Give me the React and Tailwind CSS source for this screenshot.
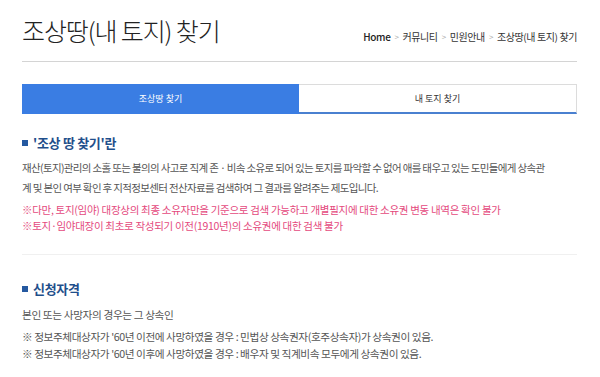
import React from 'react';

const font = { fontFamily: '"Noto Sans CJK KR", "Noto Sans", sans-serif' };

function Breadcrumb() {
  const items = ['커뮤니티', '민원안내', '조상땅(내 토지) 찾기'];
  return (
    <div className="flex items-center text-[10px] leading-[12px] text-[#333] tracking-[-0.4px]">
      <span className="font-medium text-[#222]">Home</span>
      {items.map((it) => (
        <React.Fragment key={it}>
          <span className="mx-[4px] text-[#aaa] text-[8px]">&gt;</span>
          <span>{it}</span>
        </React.Fragment>
      ))}
    </div>
  );
}

function SectionTitle({ children }) {
  return (
    <h3 className="flex items-center text-[13px] leading-[16px] font-bold text-[#1f4f8b] tracking-[-0.3px]">
      <span className="w-[6px] h-[6px] bg-[#2559a0] mr-[5px]" />
      {children}
    </h3>
  );
}

export default function App() {
  return (
    <div className="w-[600px] h-[377px] bg-white overflow-hidden" style={font}>
      <div className="ml-[22px] w-[555px]">
        {/* Header */}
        <div className="flex justify-between items-start h-[62px] border-b border-[#d4d4d4]">
          <h1 className="mt-[13px] text-[25px] leading-[34px] font-light text-[#222] tracking-[-1.1px]">
            조상땅(내 토지) 찾기
          </h1>
          <div className="mt-[31px]">
            <Breadcrumb />
          </div>
        </div>

        {/* Tabs */}
        <div className="flex mt-[22px] h-[30px] text-[9px]">
          <div className="w-[277px] flex items-center justify-center bg-[#3a7de3] text-white">
            조상땅 찾기
          </div>
          <div className="flex-1 flex items-center justify-center border-t border-r border-[#dcdcdc] border-b-2 border-b-[#4a80d0] text-[#333]">
            내 토지 찾기
          </div>
        </div>

        {/* Section 1 */}
        <div className="mt-[21px]">
          <SectionTitle>'조상 땅 찾기'란</SectionTitle>
          <p className="mt-[7px] text-[10.5px] leading-[20px] text-[#555] tracking-[-0.65px] whitespace-nowrap">
            재산(토지)관리의 소홀 또는 불의의 사고로 직계 존 · 비속 소유로 되어 있는 토지를 파악할 수 없어 애를 태우고 있는 도민들에게 상속관
            <br />
            계 및 본인 여부 확인 후 지적정보센터 전산자료를 검색하여 그 결과를 알려주는 제도입니다.
          </p>
          <div className="mt-[4px] text-[10.5px] leading-[16px] text-[#e4497d] tracking-[-0.3px] whitespace-nowrap">
            <p>※다만, 토지(임야) 대장상의 최종 소유자만을 기준으로 검색 가능하고 개별필지에 대한 소유권 변동 내역은 확인 불가</p>
            <p>※토지·임야대장이 최초로 작성되기 이전(1910년)의 소유권에 대한 검색 불가</p>
          </div>
        </div>

        <div className="mt-[20px] border-t border-[#f0f0f0]" />

        {/* Section 2 */}
        <div className="mt-[26px]">
          <SectionTitle>신청자격</SectionTitle>
          <p className="mt-[9px] text-[10.7px] leading-[18px] text-[#555] tracking-[-0.4px]">
            본인 또는 사망자의 경우는 그 상속인
          </p>
          <div className="mt-[4px] text-[10.7px] leading-[17px] text-[#555] tracking-[-0.45px] whitespace-nowrap">
            <p>※ 정보주체대상자가 '60년 이전에 사망하였을 경우 : 민법상 상속권자(호주상속자)가 상속권이 있음.</p>
            <p>※ 정보주체대상자가 '60년 이후에 사망하였을 경우 : 배우자 및 직계비속 모두에게 상속권이 있음.</p>
          </div>
        </div>
      </div>
    </div>
  );
}
